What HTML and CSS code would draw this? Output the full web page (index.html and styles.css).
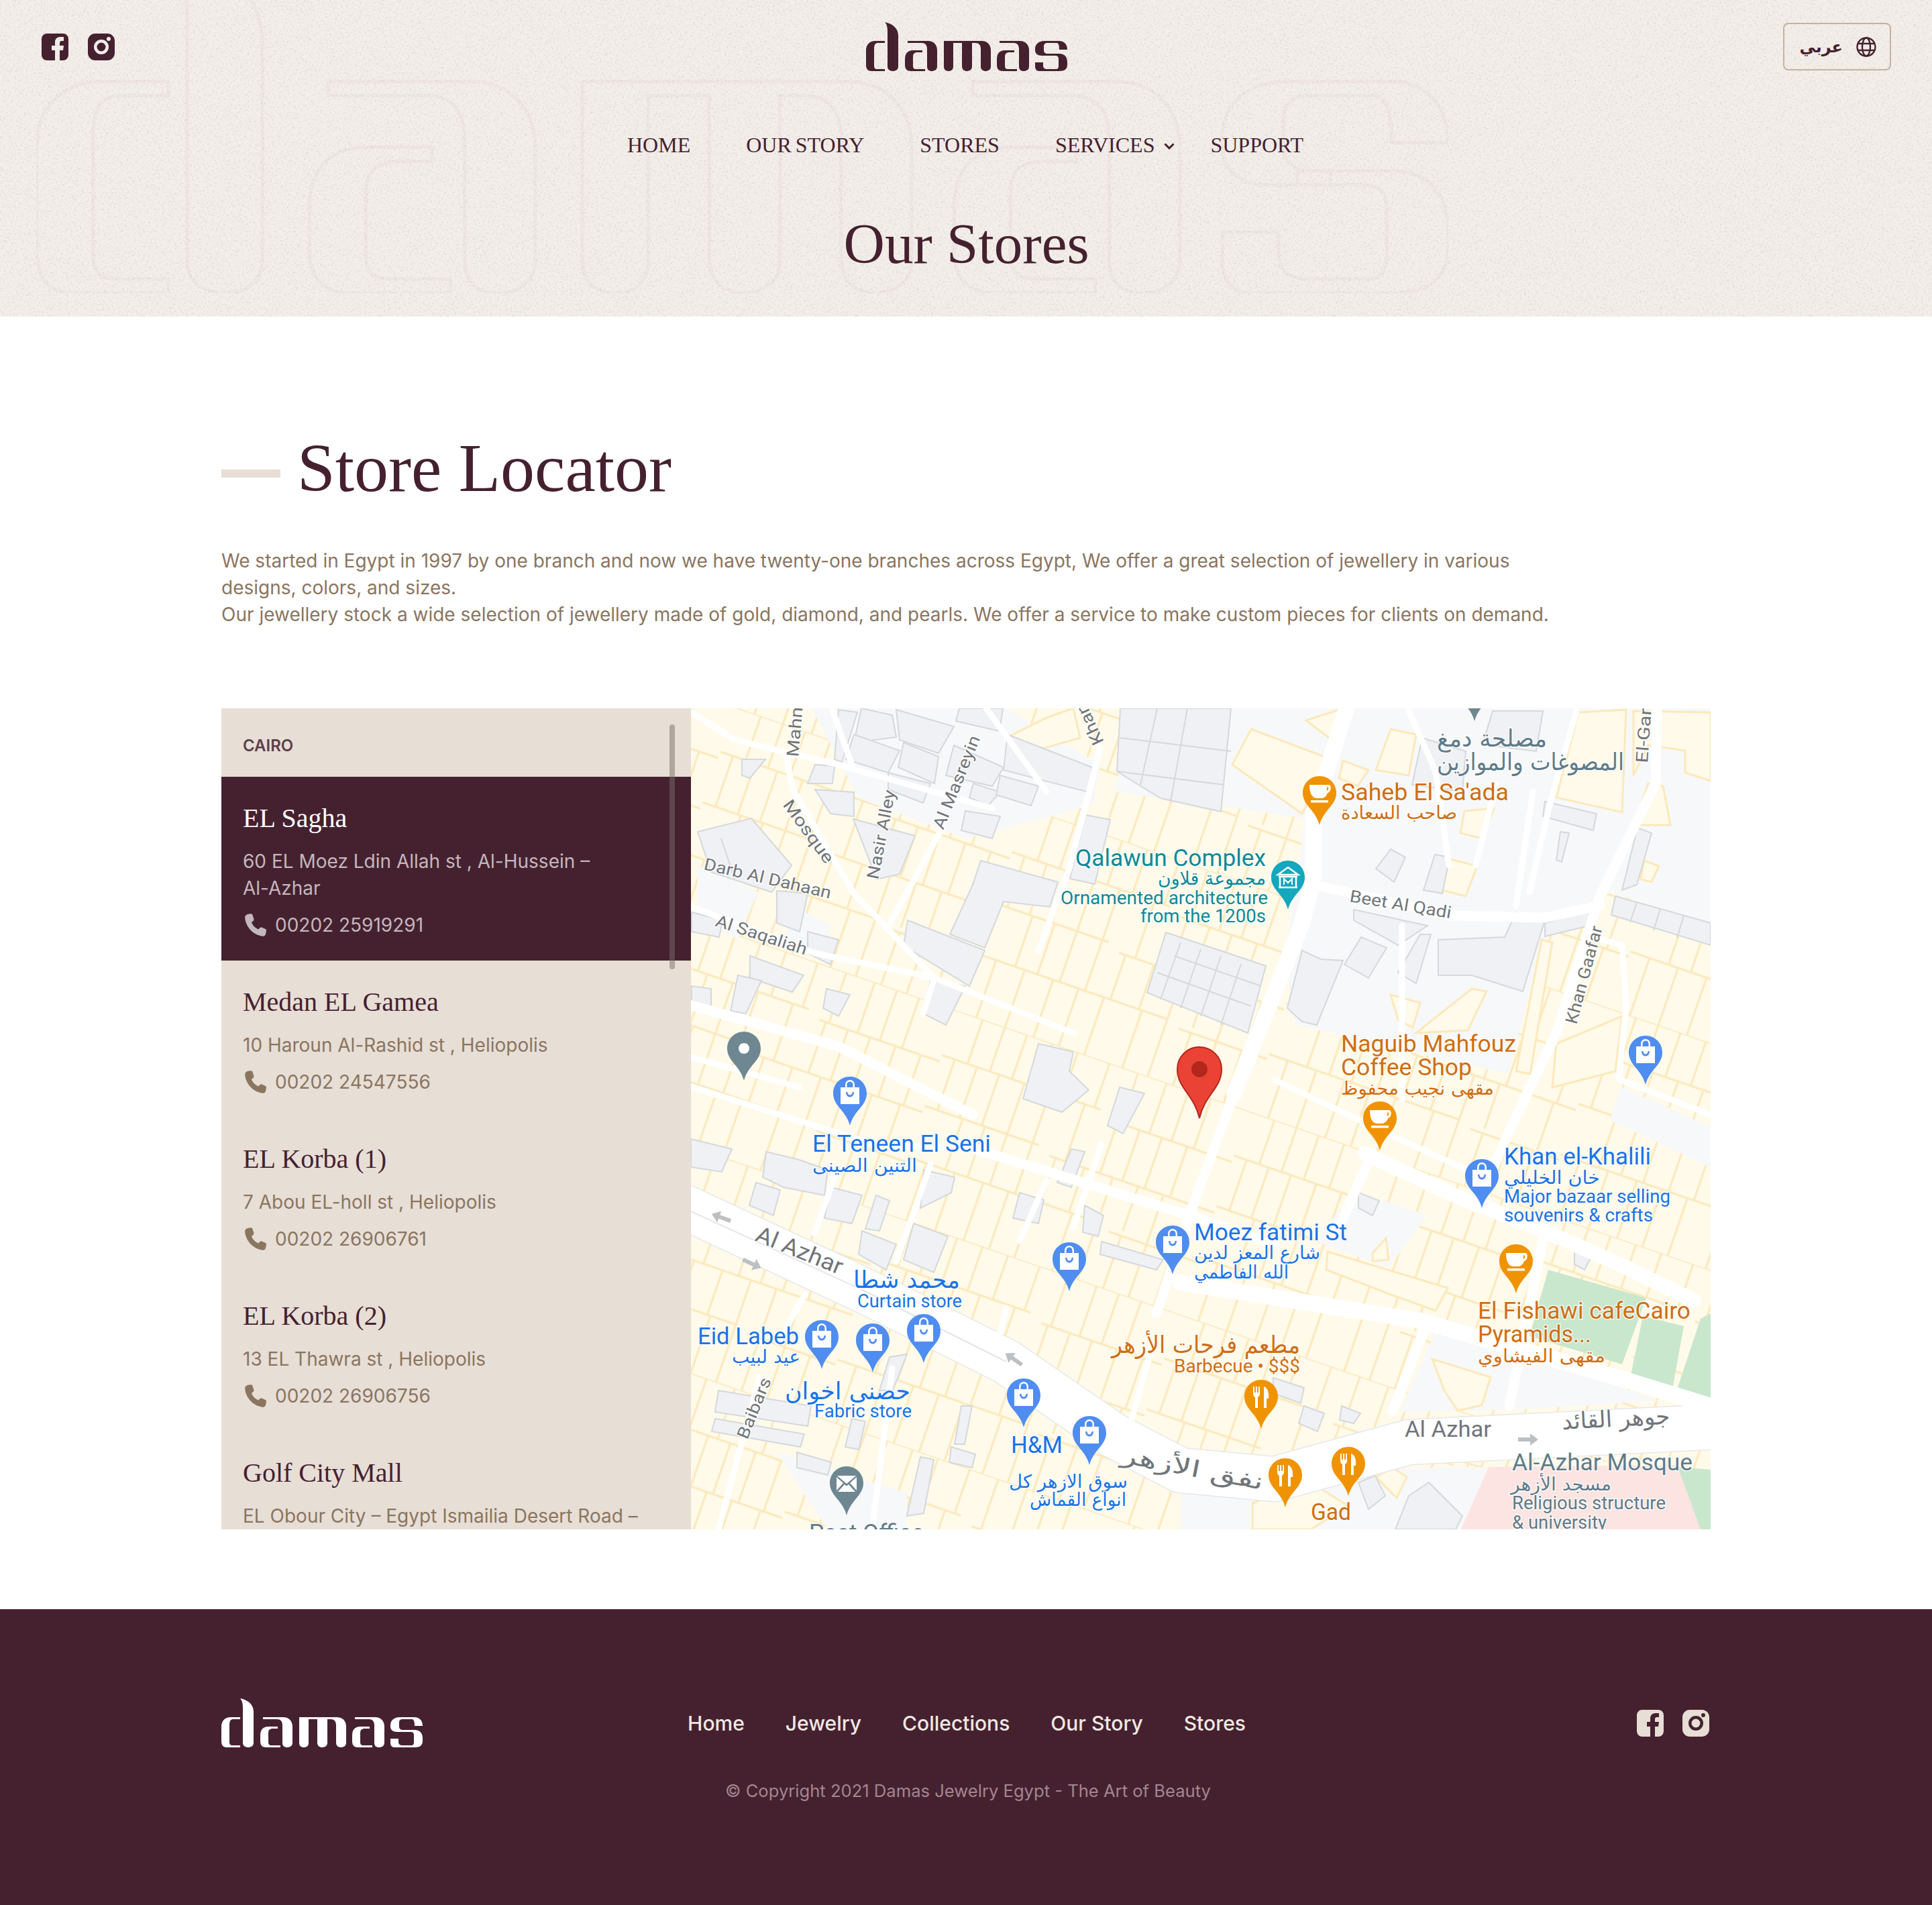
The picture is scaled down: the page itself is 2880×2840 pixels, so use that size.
FILE: index.html
```html
<!DOCTYPE html>
<html lang="en">
<head>
<meta charset="utf-8">
<title>Our Stores - Damas</title>
<link rel="stylesheet" href="styles.css">
</head>
<body>
<svg class="defs" width="0" height="0" aria-hidden="true">
  <defs>
    <symbol id="logo" viewBox="0 0 300 73">
      <path d="M28 28H14C5 28 0 34 0 42V64C0 70 3 73 8 73H28V70H17C13 70 12 68 12 65V40C12 33 14 31 18 31H28Z"/>
      <path d="M28 0C38 2 48 8 48 20V66C48 71 44 73 40 73C36 73 32 71 32 66V14C32 8 31 3 28 0Z"/>
      <path d="M62 28H92C101 28 106 34 106 42V66C106 71 102 73 98 73C94 73 91 71 91 66V40C91 34 88 31 83 31H62Z"/>
      <path d="M84 42H70C62 42 58 47 58 55V64C58 70 61 73 67 73H88V70H75C71 70 70 68 70 65V52C70 47 72 45 77 45H84Z"/>
      <path d="M116 28H172C181 28 186 34 186 42V66C186 71 182 73 178 73C175 73 171 71 171 66V40C171 34 168 31 163 31H158V66C158 71 154 73 150 73C147 73 143 71 143 66V31H130V66C130 71 127 73 123 73C119 73 116 71 116 66Z"/>
      <path d="M199 28H229C238 28 243 34 243 42V66C243 71 239 73 235 73C231 73 228 71 228 66V40C228 34 225 31 220 31H199Z"/>
      <path d="M221 42H207C199 42 195 47 195 55V64C195 70 198 73 204 73H225V70H212C208 70 207 68 207 65V52C207 47 209 45 214 45H221Z"/>
      <path d="M300 41C300 33 295 28 288 28H266C257 28 252 33 252 40V42C252 47 256 50 262 50H275V47H271C267 47 265 45 265 42V36C265 33 267 31 270 31H284C288 31 288 38 288 41Z"/>
      <path d="M268 47H288C296 47 300 52 300 60V63C300 70 296 73 288 73H258C254 73 252 70 252 66V60H264V65C264 68 266 70 270 70H283C286 70 287 68 287 65V55C287 51 285 50 282 50H268Z"/>
    </symbol>
    <symbol id="fb" viewBox="0 0 40 40">
      <path fill-rule="evenodd" d="M8 0H32A8 8 0 0 1 40 8V32A8 8 0 0 1 32 40H27V25H32L33 18H27V14C27 12 28 11 30 11H33V5H28C23 5 20 8 20 13V18H15V25H20V40H8A8 8 0 0 1 0 32V8A8 8 0 0 1 8 0Z"/>
    </symbol>
    <symbol id="ig" viewBox="0 0 40 40">
      <path fill-rule="evenodd" d="M11 0H29A11 11 0 0 1 40 11V29A11 11 0 0 1 29 40H11A11 11 0 0 1 0 29V11A11 11 0 0 1 11 0ZM20 9A11 11 0 1 0 20 31A11 11 0 1 0 20 9ZM20 13.500A6.500 6.500 0 1 1 20 26.500A6.500 6.500 0 1 1 20 13.500ZM31 5A3 3 0 1 0 31 11A3 3 0 1 0 31 5Z"/>
    </symbol>
    <symbol id="phone" viewBox="0 0 32 32">
      <path d="M7 1.500L10.500 1C11.800 1 12.500 1.800 13 3L14.500 8C14.800 9 14.500 10 13.500 10.800L11.500 12.500C13 16.500 16 20 20.500 21.800L22.500 19.800C23.300 19 24.200 18.800 25.200 19.200L29.500 21C30.800 21.600 31.300 22.500 31 24L30.300 27.800C29.800 30 28.300 31 26.300 30.800C14 29.500 3.500 18.500 2.800 6C2.700 3.500 4.500 2 7 1.500Z"/>
    </symbol>
    <symbol id="pin" viewBox="0 0 50 73">
      <path d="M25 0C11 0 0 11 0 25C0 44 19 50 25 73C31 50 50 44 50 25C50 11 39 0 25 0Z"/>
    </symbol>
    <g id="i-shop">
      <path class="ic-fill" fill-rule="evenodd" d="M11 16H18V12A7 7 0 0 1 32 12V16H39V41H11ZM20.500 16H29.500V12A4.500 4.500 0 0 0 20.500 12ZM19 23C19 33 31 33 31 23H28.500C28.500 29 21.500 29 21.500 23Z"/>
    </g>
    <g id="i-coffee">
      <path class="ic-fill" fill-rule="evenodd" d="M10 13H39C43 13 43 24 37 25C36 29 33 32 29 33H20C13 32 10 24 10 13ZM36 16V22C39 21 39 16 36 16ZM12 36H38V39.500H12Z"/>
    </g>
    <g id="i-food">
      <path class="ic-fill" d="M13 10H15V19H17V10H19V19H21V10H23V21C23 24 21 25 20 26V42H16V26C14 25 13 24 13 21ZM29 10C35 12 37 20 36 28H33V42H29Z"/>
    </g>
    <g id="i-mail">
      <path class="ic-fill" d="M11 14H39L25 26ZM10 16L20 25L10 36ZM40 16V36L30 25ZM12 38L22 27L25 29.500L28 27L38 38Z"/>
    </g>
    <g id="i-museum">
      <path class="ic-stroke" d="M10 21L25 10L40 21ZM13 24V39M37 24V39M11 40H39M11 24H39"/>
      <path class="ic-stroke thin" d="M19 36V27L25 33L31 27V36"/>
    </g>
    <pattern id="blocks" width="460" height="320" patternUnits="userSpaceOnUse" patternTransform="rotate(19)">
      <rect width="460" height="320" class="p-bg"/>
      <path class="p-line" d="M0 0H460M0 70H250M270 80H460M0 150H180M200 160H460M0 230H300M320 238H460M40 0V70M75 0V70M110 0V70M150 0V70M190 0V70M240 0V70M285 0V80M330 0V80M365 0V80M400 0V80M20 70V150M55 70V150M90 70V150M130 70V150M170 70V150M225 70V160M280 80V160M315 80V160M350 80V160M390 80V160M430 80V160M60 150V230M95 150V230M130 150V230M170 150V230M210 160V230M255 160V230M300 160V230M340 160V230M380 160V238M425 160V238M30 230V320M75 230V320M120 230V320M160 230V320M200 230V320M260 230V320M300 230V320M340 238V320M380 238V320M420 238V320"/>
    </pattern>
  </defs>
</svg>

<header class="site-head">
  <svg class="noise" width="2880" height="472" aria-hidden="true">
    <filter id="grain" x="0" y="0" width="100%" height="100%">
      <feTurbulence type="fractalNoise" baseFrequency="0.36" numOctaves="2" seed="7"/>
      <feColorMatrix values="0 0 0 0 0.56  0 0 0 0 0.49  0 0 0 0 0.44  3 0 0 0 -1.500"/>
    </filter>
    <rect width="2880" height="472" filter="url(#grain)" class="grain-rect"/>
  </svg>
  <svg class="watermark" aria-hidden="true"><use href="#logo"/></svg>
  <div class="head-row">
    <div class="socials dark">
      <svg class="soc"><use href="#fb"/></svg>
      <svg class="soc"><use href="#ig"/></svg>
    </div>
    <svg class="logo dark" role="img" aria-label="damas"><use href="#logo"/></svg>
    <div class="lang-wrap">
      <a class="lang" href="#">
        <span class="lang-text" lang="ar">عربي</span>
        <svg class="globe" viewBox="0 0 30 30" aria-hidden="true">
          <circle cx="15" cy="15" r="13.500"/>
          <ellipse cx="15" cy="15" rx="6" ry="13.500"/>
          <path d="M3 10H27M3 20H27"/>
        </svg>
      </a>
    </div>
  </div>
  <nav class="main-nav">
    <a href="#">HOME</a>
    <a href="#">OUR STORY</a>
    <a href="#">STORES</a>
    <a href="#" class="has-sub">SERVICES<svg class="chev" viewBox="0 0 16 10" aria-hidden="true"><path d="M1.500 1.500L8 8L14.500 1.500"/></svg></a>
    <a href="#">SUPPORT</a>
  </nav>
  <h1 class="page-title">Our Stores</h1>
</header>

<main class="store-sec">
  <h2 class="sec-title"><span class="dash"></span>Store Locator</h2>
  <p class="intro">We started in Egypt in 1997 by one branch and now we have twenty-one branches across Egypt, We offer a great selection of jewellery in various designs, colors, and sizes.<br>Our jewellery stock a wide selection of jewellery made of gold, diamond, and pearls. We offer a service to make custom pieces for clients on demand.</p>

  <div class="locator">
    <aside class="stores">
      <div class="scroll-thumb"></div>
      <div class="city">CAIRO</div>
      <article class="store active">
        <h3>EL Sagha</h3>
        <p class="addr">60 EL Moez Ldin Allah st , Al-Hussein – <span class="nb">Al-Azhar</span></p>
        <p class="tel"><svg class="ph"><use href="#phone"/></svg>00202 25919291</p>
      </article>
      <article class="store">
        <h3>Medan EL Gamea</h3>
        <p class="addr">10 Haroun Al-Rashid st , Heliopolis</p>
        <p class="tel"><svg class="ph"><use href="#phone"/></svg>00202 24547556</p>
      </article>
      <article class="store">
        <h3>EL Korba (1)</h3>
        <p class="addr">7 Abou EL-holl st , Heliopolis</p>
        <p class="tel"><svg class="ph"><use href="#phone"/></svg>00202 26906761</p>
      </article>
      <article class="store">
        <h3>EL Korba (2)</h3>
        <p class="addr">13 EL Thawra st , Heliopolis</p>
        <p class="tel"><svg class="ph"><use href="#phone"/></svg>00202 26906756</p>
      </article>
      <article class="store">
        <h3>Golf City Mall</h3>
        <p class="addr">EL Obour City – Egypt Ismailia Desert Road –</p>
      </article>
    </aside>

    <svg class="map" viewBox="1030 1056 1520 1224" role="img" aria-label="Map of Al-Azhar, Cairo">
      <rect x="1030" y="1056" width="1520" height="1224" fill="url(#blocks)"/>

      <!-- open ground -->
      <g class="ground">
        <polygon points="1660,1180 1700,1056 2550,1056 2550,1376 2400,1330 2303,1401 2248,1601 1930,1527 1915,1430 1945,1220 1810,1200"/>
        <polygon points="2020,1775 2128,1812 2070,1890 1960,1850"/>
        <polygon points="2087,2105 2143,1979 2474,2088 2270,2101"/>
        <polygon points="1760,2195 2219,2187 2178,2280 1760,2280"/>
        <polygon points="1158,2165 1352,2226 1352,2280 1234,2280"/>
        <polygon points="1040,1290 1130,1330 1100,1400 1040,1370"/>
        <polygon points="1180,1350 1240,1380 1220,1420 1170,1400"/>
        <polygon points="2417,1620 2550,1680 2550,1740 2400,1670"/>
        <polygon points="1210,1056 1500,1056 1640,1140 1630,1200 1440,1250 1280,1190"/>
      </g>

      <!-- yellow patches on ground -->
      <g class="yellow">
        <polygon points="1865,1087 1985,1132 1941,1213 1837,1140"/>
        <polygon points="1947,1074 1996,1058 2013,1070 1985,1103"/>
        <polygon points="2002,1134 2040,1148 2024,1172 1996,1160"/>
        <polygon points="2073,1087 2111,1095 2100,1156 2051,1148"/>
        <polygon points="2353,1062 2424,1058 2418,1211 2320,1189"/>
        <polygon points="2435,1060 2550,1062 2550,1164 2512,1152 2512,1119 2457,1111 2435,1156"/>
        <polygon points="2457,1168 2479,1172 2490,1230 2435,1230"/>
        <polygon points="2155,1279 2202,1291 2185,1336 2150,1327"/>
        <polygon points="2183,1209 2227,1205 2210,1250 2177,1242"/>
        <polygon points="2451,1283 2473,1291 2462,1315 2446,1311"/>
        <polygon points="2073,1483 2117,1495 2106,1532 2084,1520"/>
        <polygon points="2298,1401 2314,1405 2281,1601 2260,1597"/>
        <polygon points="2320,1556 2418,1515 2408,1597 2314,1621"/>
        <polygon points="2194,1474 2216,1478 2188,1536 2111,1540"/>
        <polygon points="2135,2026 2222,2053 2209,2095 2173,2103 2153,2073"/>
        <polygon points="1867,2241 1949,2207 2010,2245 1954,2280 1867,2280"/>
        <polygon points="2051,2202 2076,2188 2097,2202 2082,2233"/>
        <polygon points="1979,1866 2158,1920 2140,1954 2076,1931 1977,1893"/>
        <polygon points="2046,1868 2066,1846 2070,1878 2046,1880"/>
        <polygon points="1500,1100 1560,1070 1600,1056 1610,1100 1540,1120"/>
      </g>

      <!-- parks -->
      <g class="park">
        <polygon points="2308,1893 2454,1935 2418,2034 2280,1992"/>
        <polygon points="2449,1962 2510,1977 2490,2088 2428,2065"/>
        <polygon points="2535,1966 2550,1958 2550,2092 2495,2086"/>
        <polygon points="2500,2187 2550,2191 2550,2280 2520,2280"/>
      </g>
      <polygon class="pink" points="2219,2187 2500,2184 2535,2280 2178,2280"/>

      <!-- buildings -->
      <g class="bld">
        <polygon points="1215,1140 1244,1142 1241,1168 1204,1168"/>
        <polygon points="1250,1058 1278,1062 1255,1136 1244,1132"/>
        <polygon points="1284,1056 1330,1066 1336,1099 1273,1107"/>
        <polygon points="1273,1095 1341,1119 1324,1152 1261,1132"/>
        <polygon points="1336,1058 1422,1083 1399,1123 1341,1103"/>
        <polygon points="1347,1107 1399,1128 1393,1168 1339,1144"/>
        <polygon points="1215,1177 1273,1181 1273,1217 1238,1213"/>
        <polygon points="1324,1152 1387,1168 1376,1197 1324,1177"/>
        <polygon points="1422,1111 1496,1144 1479,1172 1410,1156"/>
        <polygon points="1451,1168 1491,1181 1473,1201 1445,1189"/>
        <polygon points="1502,1095 1628,1144 1623,1181 1496,1148"/>
        <polygon points="1491,1156 1548,1172 1537,1201 1485,1185"/>
        <polygon points="1439,1209 1491,1217 1479,1250 1433,1238"/>
        <polygon points="1430,1056 1495,1056 1490,1090 1425,1075"/>
        <polygon points="1106,1132 1141,1132 1118,1160 1106,1156"/>
        <polygon points="1031,1360 1077,1372 1072,1397 1031,1389"/>
        <polygon points="1204,1389 1250,1401 1238,1438 1204,1421"/>
        <polygon points="1158,1328 1204,1332 1192,1389 1158,1376"/>
        <polygon points="1031,1470 1060,1474 1060,1503 1031,1495"/>
        <polygon points="1670,1056 1835,1056 1820,1210 1730,1190 1665,1150"/>
        <polygon points="1040,1240 1120,1220 1180,1290 1150,1330 1060,1300"/>
        <polygon points="1272,1221 1364,1246 1341,1303 1307,1311"/>
        <polygon points="1462,1283 1577,1315 1565,1352 1496,1344 1468,1413 1416,1393 1450,1319"/>
        <polygon points="1353,1372 1468,1417 1445,1470 1347,1410"/>
        <polygon points="1118,1425 1198,1454 1181,1479 1118,1458"/>
        <polygon points="1100,1454 1135,1462 1112,1511 1089,1507"/>
        <polygon points="1387,1462 1439,1470 1410,1528 1376,1511"/>
        <polygon points="1232,1474 1267,1483 1250,1515 1227,1503"/>
        <polygon points="1548,1556 1600,1568 1594,1597 1623,1625 1583,1658 1525,1638"/>
        <polygon points="1669,1621 1706,1630 1674,1690 1651,1678"/>
        <polygon points="1618,1215 1655,1222 1632,1318 1595,1310"/>
        <polygon points="1738,1390 1887,1440 1860,1540 1710,1480"/>
        <polygon points="2051,1295 2073,1266 2095,1278 2078,1315"/>
        <polygon points="2122,1327 2139,1274 2161,1278 2150,1332"/>
        <polygon points="2018,1356 2128,1380 2084,1409 2018,1372"/>
        <polygon points="2084,1450 2117,1393 2133,1393 2111,1466"/>
        <polygon points="2144,1401 2243,1397 2260,1360 2303,1372 2270,1478 2194,1454 2144,1454"/>
        <polygon points="2303,1376 2369,1356 2369,1380 2303,1396"/>
        <polygon points="2408,1336 2550,1376 2550,1409 2402,1364"/>
        <polygon points="2418,1327 2441,1234 2462,1242 2440,1319"/>
        <polygon points="2303,1195 2380,1213 2375,1238 2300,1217"/>
        <polygon points="2320,1282 2326,1240 2339,1242 2328,1285"/>
        <polygon points="1941,1417 1969,1430 2002,1432 1963,1528 1941,1523 1919,1503"/>
        <polygon points="2004,1438 2029,1397 2067,1413 2040,1458"/>
        <polygon points="2120,1100 2185,1120 2180,1180 2105,1170"/>
        <polygon points="2225,1060 2300,1060 2290,1120 2210,1110"/>
        <polygon points="1030,1698 1091,1713 1076,1747 1030,1740"/>
        <polygon points="1142,1717 1188,1728 1234,1744 1229,1782 1168,1770 1137,1755"/>
        <polygon points="1127,1763 1163,1774 1153,1812 1117,1797"/>
        <polygon points="1239,1770 1285,1782 1270,1824 1229,1816"/>
        <polygon points="1306,1782 1326,1790 1311,1835 1290,1832"/>
        <polygon points="1377,1744 1423,1755 1418,1778 1372,1801"/>
        <polygon points="1362,1824 1413,1843 1392,1897 1347,1878"/>
        <polygon points="1285,1835 1336,1855 1321,1893 1280,1870"/>
        <polygon points="1520,1778 1556,1789 1548,1824 1510,1816"/>
        <polygon points="1617,1797 1645,1812 1637,1843 1614,1837"/>
        <polygon points="1642,1851 1734,1878 1724,1893 1640,1870"/>
        <polygon points="1597,1713 1617,1717 1597,1770 1576,1763"/>
        <polygon points="1326,2023 1352,2019 1331,2073 1311,2073"/>
        <polygon points="1066,2115 1199,2138 1193,2157 1061,2134"/>
        <polygon points="1071,2073 1209,2096 1204,2126 1066,2105"/>
        <polygon points="1188,2165 1239,2180 1234,2199 1188,2188"/>
        <polygon points="1433,2096 1449,2096 1438,2153 1423,2153"/>
        <polygon points="1270,2115 1290,2119 1280,2161 1260,2157"/>
        <polygon points="1372,2172 1392,2176 1377,2256 1352,2260"/>
        <polygon points="1418,2157 1454,2168 1449,2188 1415,2180"/>
        <polygon points="2025,1778 2056,1790 2046,1812 2025,1801"/>
        <polygon points="2347,1866 2372,1874 2362,1893 2347,1885"/>
        <polygon points="1898,2054 1944,2069 1939,2092 1898,2077"/>
        <polygon points="1944,2096 1974,2107 1964,2134 1936,2122"/>
        <polygon points="2000,2096 2028,2107 2018,2122 1997,2117"/>
        <polygon points="2025,2210 2050,2200 2065,2230 2040,2250"/>
        <polygon points="2100,2230 2130,2210 2180,2260 2170,2280 2080,2280"/>
      </g>
      <path class="bld-lines" d="M1725 1056L1700 1170M1770 1056L1745 1195M1670 1100L1835 1120M1665 1150L1825 1170M1760 1405L1730 1490M1790 1415L1760 1503M1820 1425L1790 1515M1850 1437L1820 1528M1750 1425L1880 1470M1725 1450L1865 1500M2440 1345L2430 1375M2475 1355L2465 1387M2510 1365L2500 1398M1075 1250L1095 1310"/>

      <!-- roads -->
      <g class="roads">
        <path class="r-case r90" d="M1000 1790L1290 1925L1500 2030L1660 2140L1760 2192L1900 2205L2100 2150L2600 2125"/>
        <path class="r90" d="M1000 1790L1290 1925L1500 2030L1660 2140L1760 2192L1900 2205L2100 2150L2600 2125"/>
        <path class="r26" d="M2007 1056L1958 1213L1958 1311L1941 1376L1892 1499L1840 1630"/>
        <path class="r20" d="M1840 1630L1770 1820L1724 1958"/>
        <path class="r20" d="M1958 1319L2163 1365L2303 1368L2385 1350"/>
        <path class="r20" d="M2470 1056L2468 1168L2385 1336L2320 1540L2248 1690L2200 1800"/>
        <path class="r14" d="M2385 1400L2418 1409L2424 1499L2413 1609L2550 1662"/>
        <path class="r24" d="M2035 1720L2168 1782L2295 1832L2423 1889L2525 1939"/>
        <path class="r26" d="M1760 1912L2117 1969L2423 2057L2550 2096"/>
        <path class="r20" d="M2127 1973L2076 2103"/>
        <path class="r20" d="M2045 1720L1990 1843"/>
        <path class="r20" d="M2301 1843L2250 2096"/>
        <path class="r14" d="M1031 1062L1095 1103L1250 1140L1479 1205"/>
        <path class="r14" d="M1172 1128L1181 1176L1273 1332L1393 1458L1376 1511"/>
        <path class="r14" d="M1405 1234L1324 1381"/>
        <path class="r14" d="M1640 1115L1594 1295L1548 1417"/>
        <path class="r14" d="M1031 1352L1215 1421L1393 1458L1600 1540"/>
        <path class="r20" d="M1031 1499L1250 1560L1450 1662"/>
        <path class="r14" d="M1031 1576L1192 1621"/>
        <path class="r14" d="M1244 1755L1214 1839"/>
        <path class="r14" d="M1387 1736L1336 1881"/>
        <path class="r20" d="M1454 1713L1785 1816L1900 1855"/>
        <path class="r14" d="M1642 1705L1600 1830"/>
        <path class="r14" d="M1132 2053L1071 2280"/>
        <path class="r14" d="M1030 1620L1300 1705L1440 1713"/>
        <path class="r14" d="M1270 1140L1240 1056M1470 1056L1560 1180"/>
        <path class="r14" d="M2090 1640L2090 1380M2100 1060L2140 1150L2160 1290"/>
        <path class="r14" d="M2350 1060L2310 1200L2280 1330"/>
        <path class="r14" d="M1900 1610L2090 1700L2200 1750"/>
        <path class="r14" d="M1500 1950L1480 2030M1200 1930L1160 2000M1330 2040L1300 2280"/>
        <path class="r14" d="M1720 2000L1680 2140M1560 1760L1520 1850"/>
        <path class="r14" d="M2230 1170L2200 1290M2285 1180L2260 1350"/>
      </g>
      <path class="center-line" d="M1030 1806L1290 1925L1500 2030"/>

      <!-- direction arrows -->
      <g class="arrows">
        <path transform="translate(1075 1815) rotate(200)" d="M-15 -3H3V-9L15 0L3 9V3H-15Z"/>
        <path transform="translate(1121 1884) rotate(25)" d="M-15 -3H3V-9L15 0L3 9V3H-15Z"/>
        <path transform="translate(1511 2026) rotate(215)" d="M-15 -3H3V-9L15 0L3 9V3H-15Z"/>
        <path transform="translate(2278 2146)" d="M-15 -3H3V-9L15 0L3 9V3H-15Z"/>
      </g>

      <!-- street labels -->
      <g class="lbl street">
        <text transform="translate(1190 1129) rotate(-85)" textLength="84" lengthAdjust="spacingAndGlyphs">Mahm</text>
        <text transform="translate(1166 1200) rotate(54)" textLength="110" lengthAdjust="spacingAndGlyphs">Mosque</text>
        <text transform="translate(1309 1312) rotate(-79)" textLength="135" lengthAdjust="spacingAndGlyphs">Nasir Alley</text>
        <text transform="translate(1406 1238) rotate(-68)" textLength="148" lengthAdjust="spacingAndGlyphs">Al Masreyin</text>
        <text transform="translate(1646 1106) rotate(-115)" textLength="66" lengthAdjust="spacingAndGlyphs">Khan</text>
        <text transform="translate(1048 1296) rotate(13)" textLength="194" lengthAdjust="spacingAndGlyphs">Darb Al Dahaan</text>
        <text transform="translate(1065 1380) rotate(18)" textLength="142" lengthAdjust="spacingAndGlyphs">Al Saqaliah</text>
        <text transform="translate(2011 1344) rotate(9.500)" textLength="153" lengthAdjust="spacingAndGlyphs">Beet Al Qadi</text>
        <text transform="translate(2350 1528) rotate(-75)" textLength="150" lengthAdjust="spacingAndGlyphs">Khan Gaafar</text>
        <text transform="translate(2456 1138) rotate(-86)" textLength="92" lengthAdjust="spacingAndGlyphs">El-Garr</text>
        <text transform="translate(1114 2147) rotate(-68)" textLength="96" lengthAdjust="spacingAndGlyphs">Baibars</text>
      </g>
      <g class="lbl street big">
        <text transform="translate(1124 1849) rotate(22)" textLength="137" lengthAdjust="spacingAndGlyphs">Al Azhar</text>
        <text x="2094" y="2142" textLength="129" lengthAdjust="spacingAndGlyphs">Al Azhar</text>
      </g>
      <g class="lbl street ar big" lang="ar">
        <text transform="translate(1670 2180) rotate(11)" textLength="215" lengthAdjust="spacingAndGlyphs">نفق الأزهر</text>
        <text transform="translate(2329 2131) rotate(-3)" textLength="161" lengthAdjust="spacingAndGlyphs">جوهر القائد</text>
      </g>

      <!-- place labels -->
      <g class="lbl teal">
        <text class="big" x="1603" y="1291" textLength="284" lengthAdjust="spacingAndGlyphs">Qalawun Complex</text>
        <text class="mid" x="1581" y="1348" textLength="309" lengthAdjust="spacingAndGlyphs">Ornamented architecture</text>
        <text class="mid" x="1700" y="1375" textLength="187" lengthAdjust="spacingAndGlyphs">from the 1200s</text>
        <text class="ar small" lang="ar" x="1726" y="1319" textLength="161" lengthAdjust="spacingAndGlyphs">مجموعة قلاون</text>
      </g>
      <g class="lbl slate">
        <text class="ar big" lang="ar" x="2142" y="1113" textLength="164" lengthAdjust="spacingAndGlyphs">مصلحة دمغ</text>
        <text class="ar big" lang="ar" x="2142" y="1148" textLength="279" lengthAdjust="spacingAndGlyphs">المصوغات والموازين</text>
        <text class="big" x="1206" y="2297" textLength="171" lengthAdjust="spacingAndGlyphs">Post Office</text>
        <text class="big" x="2254" y="2192" textLength="269" lengthAdjust="spacingAndGlyphs">Al-Azhar Mosque</text>
        <text class="ar small" lang="ar" x="2252" y="2222" textLength="150" lengthAdjust="spacingAndGlyphs">مسجد الأزهر</text>
        <text class="mid" x="2254" y="2250" textLength="229" lengthAdjust="spacingAndGlyphs">Religious structure</text>
        <text class="mid" x="2254" y="2279" textLength="141" lengthAdjust="spacingAndGlyphs">&amp; university</text>
      </g>
      <g class="lbl amber">
        <text class="big" x="1999" y="1193" textLength="250" lengthAdjust="spacingAndGlyphs">Saheb El Sa'ada</text>
        <text class="ar small" lang="ar" x="1999" y="1221" textLength="173" lengthAdjust="spacingAndGlyphs">صاحب السعادة</text>
        <text class="big" x="1999" y="1568" textLength="261" lengthAdjust="spacingAndGlyphs">Naguib Mahfouz</text>
        <text class="big" x="1999" y="1603" textLength="195" lengthAdjust="spacingAndGlyphs">Coffee Shop</text>
        <text class="ar small" lang="ar" x="1999" y="1632" textLength="228" lengthAdjust="spacingAndGlyphs">مقهى نجيب محفوظ</text>
        <text class="big" x="2203" y="1966" textLength="317" lengthAdjust="spacingAndGlyphs">El Fishawi cafeCairo</text>
        <text class="big" x="2203" y="2001" textLength="169" lengthAdjust="spacingAndGlyphs">Pyramids...</text>
        <text class="ar small" lang="ar" x="2203" y="2031" textLength="190" lengthAdjust="spacingAndGlyphs">مقهى الفيشاوي</text>
        <text class="ar big" lang="ar" x="1657" y="2017" textLength="281" lengthAdjust="spacingAndGlyphs">مطعم فرحات الأزهر</text>
        <text class="mid" x="1750" y="2046" textLength="188" lengthAdjust="spacingAndGlyphs">Barbecue • $$$</text>
        <text class="big" x="1954" y="2266" textLength="60" lengthAdjust="spacingAndGlyphs">Gad</text>
      </g>
      <g class="lbl blue">
        <text class="big" x="1211" y="1717" textLength="266" lengthAdjust="spacingAndGlyphs">El Teneen El Seni</text>
        <text class="ar small" lang="ar" x="1211" y="1747" textLength="156" lengthAdjust="spacingAndGlyphs">التنين الصينى</text>
        <text class="ar big" lang="ar" x="1272" y="1920" textLength="159" lengthAdjust="spacingAndGlyphs">محمد شطا</text>
        <text class="mid" x="1278" y="1949" textLength="156" lengthAdjust="spacingAndGlyphs">Curtain store</text>
        <text class="big" x="1040" y="2004" textLength="151" lengthAdjust="spacingAndGlyphs">Eid Labeb</text>
        <text class="ar small" lang="ar" x="1091" y="2032" textLength="102" lengthAdjust="spacingAndGlyphs">عيد لبيب</text>
        <text class="ar big" lang="ar" x="1170" y="2086" textLength="187" lengthAdjust="spacingAndGlyphs">حصنى اخوان</text>
        <text class="mid" x="1214" y="2113" textLength="145" lengthAdjust="spacingAndGlyphs">Fabric store</text>
        <text class="big" x="1507" y="2166" textLength="77" lengthAdjust="spacingAndGlyphs">H&amp;M</text>
        <text class="ar small" lang="ar" x="1504" y="2218" textLength="177" lengthAdjust="spacingAndGlyphs">سوق الازهر كل</text>
        <text class="ar small" lang="ar" x="1535" y="2245" textLength="144" lengthAdjust="spacingAndGlyphs">انواع القماش</text>
        <text class="big" x="1780" y="1849" textLength="228" lengthAdjust="spacingAndGlyphs">Moez fatimi St</text>
        <text class="ar small" lang="ar" x="1780" y="1877" textLength="188" lengthAdjust="spacingAndGlyphs">شارع المعز لدين</text>
        <text class="ar small" lang="ar" x="1780" y="1906" textLength="141" lengthAdjust="spacingAndGlyphs">الله الفاطمي</text>
        <text class="big" x="2242" y="1736" textLength="219" lengthAdjust="spacingAndGlyphs">Khan el-Khalili</text>
        <text class="ar small" lang="ar" x="2242" y="1765" textLength="143" lengthAdjust="spacingAndGlyphs">خان الخليلي</text>
        <text class="mid" x="2242" y="1793" textLength="248" lengthAdjust="spacingAndGlyphs">Major bazaar selling</text>
        <text class="mid" x="2242" y="1821" textLength="222" lengthAdjust="spacingAndGlyphs">souvenirs &amp; crafts</text>
      </g>

      <!-- pins: x,y is the top left of the 50x73 marker -->
      <g class="pin-blue">
        <g transform="translate(1242 1605)"><use href="#pin" width="50" height="73"/><use href="#i-shop"/></g>
        <g transform="translate(2428 1544)"><use href="#pin" width="50" height="73"/><use href="#i-shop"/></g>
        <g transform="translate(1200 1968)"><use href="#pin" width="50" height="73"/><use href="#i-shop"/></g>
        <g transform="translate(1276 1973)"><use href="#pin" width="50" height="73"/><use href="#i-shop"/></g>
        <g transform="translate(1352 1959)"><use href="#pin" width="50" height="73"/><use href="#i-shop"/></g>
        <g transform="translate(1569 1852)"><use href="#pin" width="50" height="73"/><use href="#i-shop"/></g>
        <g transform="translate(1723 1827)"><use href="#pin" width="50" height="73"/><use href="#i-shop"/></g>
        <g transform="translate(1501 2055)"><use href="#pin" width="50" height="73"/><use href="#i-shop"/></g>
        <g transform="translate(1599 2111)"><use href="#pin" width="50" height="73"/><use href="#i-shop"/></g>
        <g transform="translate(2184 1728)"><use href="#pin" width="50" height="73"/><use href="#i-shop"/></g>
      </g>
      <g class="pin-slate">
        <g transform="translate(1084 1538)"><use href="#pin" width="50" height="73"/><circle class="ic-fill" cx="25" cy="25" r="8"/></g>
        <g transform="translate(1237 2186)"><use href="#pin" width="50" height="73"/><use href="#i-mail"/></g>
        <g transform="translate(2173 1002)"><use href="#pin" width="50" height="73"/></g>
      </g>
      <g class="pin-teal">
        <g transform="translate(1895 1283)"><use href="#pin" width="50" height="73"/><use href="#i-museum"/></g>
      </g>
      <g class="pin-amber">
        <g transform="translate(1942 1157)"><use href="#pin" width="50" height="73"/><use href="#i-coffee"/></g>
        <g transform="translate(2032 1642)"><use href="#pin" width="50" height="73"/><use href="#i-coffee"/></g>
        <g transform="translate(2235 1855)"><use href="#pin" width="50" height="73"/><use href="#i-coffee"/></g>
        <g transform="translate(1855 2057)"><use href="#pin" width="50" height="73"/><use href="#i-food"/></g>
        <g transform="translate(1891 2174)"><use href="#pin" width="50" height="73"/><use href="#i-food"/></g>
        <g transform="translate(1985 2157)"><use href="#pin" width="50" height="73"/><use href="#i-food"/></g>
      </g>
      <g transform="translate(1754 1560)">
        <path class="pin-red" d="M34 1C16 1 1 15 1 34C1 62 26 72 34 107C42 72 67 62 67 34C67 15 52 1 34 1Z"/>
        <circle class="pin-red-dot" cx="34" cy="34" r="12"/>
      </g>
    </svg>
  </div>
</main>

<footer class="site-foot">
  <div class="foot-row">
    <svg class="logo light" role="img" aria-label="damas"><use href="#logo"/></svg>
    <nav class="foot-nav">
      <a href="#">Home</a>
      <a href="#">Jewelry</a>
      <a href="#">Collections</a>
      <a href="#">Our Story</a>
      <a href="#">Stores</a>
    </nav>
    <div class="socials light foot-soc">
      <svg class="soc"><use href="#fb"/></svg>
      <svg class="soc"><use href="#ig"/></svg>
    </div>
  </div>
  <p class="copy">© Copyright 2021 Damas Jewelry Egypt - The Art of Beauty</p>
</footer>
</body>
</html>
```
FILE: styles.css
```css
* { box-sizing: border-box; }
html, body { margin: 0; padding: 0; }
body {
  width: 2880px;
  background: #fff;
  color: #452130;
  font-family: Inter, "Liberation Sans", sans-serif;
}
a { color: inherit; text-decoration: none; }
.defs { position: absolute; }

/* header */
.site-head {
  position: relative;
  height: 472px;
  overflow: hidden;
  background: #f3eeea;
  padding: 33px 61px 0 62px;
  text-align: center;
}
.noise, .watermark { position: absolute; }
.noise { left: 0; top: 0; opacity: .36; }
.watermark {
  left: 54px;
  top: -75px;
  width: 2105px;
  height: 512px;
  fill: none;
  stroke: #a8545c;
  stroke-width: .75;
  opacity: .04;
}
.head-row, .main-nav, .page-title { position: relative; }
.head-row {
  display: grid;
  grid-template-columns: 1fr 300px 1fr;
  align-items: center;
}
.socials { display: flex; gap: 29px; }
.soc { width: 40px; height: 40px; display: block; }
.dark { fill: #452130; }
.light { fill: #e7ded6; }
.logo { width: 300px; height: 73px; display: block; }
.logo.light { fill: #fff; }
.lang-wrap { display: flex; justify-content: flex-end; }
.lang {
  width: 161px;
  height: 71px;
  border: 2px solid #c6b29f;
  border-radius: 8px;
  display: flex;
  align-items: center;
  justify-content: flex-end;
  gap: 20px;
  padding-right: 20px;
}
.lang-text {
  font: 700 24px "DejaVu Sans", sans-serif;
  color: #452130;
}
.globe { width: 30px; height: 30px; fill: none; stroke: #452130; stroke-width: 2.400; }
.main-nav {
  margin-top: 90px;
  padding-right: 3px;
  display: flex;
  justify-content: center;
  gap: 83px;
  word-spacing: -2px;
  font: 400 32px/40px "Liberation Serif", serif;
  color: #452130;
}
.has-sub { position: relative; }
.chev {
  position: absolute;
  left: 162px;
  top: 17px;
  width: 16px;
  height: 10px;
  fill: none;
  stroke: #452130;
  stroke-width: 3;
}
.page-title {
  margin: 72px 0 0;
  font: 400 85px/110px "Liberation Serif", serif;
  color: #452130;
}

/* store locator */
.store-sec { padding: 156px 330px 119px; }
.sec-title {
  margin: 0;
  display: flex;
  align-items: center;
  gap: 25px;
  font: 400 102px/140px "Liberation Serif", serif;
  color: #452130;
}
.dash { width: 88px; height: 12px; margin-top: 16px; background: #e7ded6; }
.intro {
  margin: 48px 0 120px;
  font-size: 28px;
  line-height: 40px;
  color: #8a755f;
  width: 1990px;
}
.locator {
  display: grid;
  grid-template-columns: 700px 1520px;
  height: 1224px;
}
.stores {
  position: relative;
  overflow: hidden;
  background: #e7ded6;
}
.scroll-thumb {
  position: absolute;
  left: 668px;
  top: 24px;
  width: 8px;
  height: 365px;
  border-radius: 4px;
  background: rgba(120, 110, 105, .5);
  z-index: 2;
}
.city {
  height: 102px;
  padding: 8px 32px 0;
  display: flex;
  align-items: center;
  font-size: 24px;
  font-weight: 600;
  color: #5d3f49;
}
.store { padding: 38px 60px 33px 32px; color: #8a755f; }
.store h3 {
  margin: 0 0 20px;
  font: 400 40px/48px "Liberation Serif", serif;
  color: #452130;
}
.addr { margin: 0 0 15px; font-size: 28px; line-height: 40px; }
.nb { white-space: nowrap; }
.tel { margin: 0; font-size: 28px; line-height: 40px; display: flex; align-items: center; gap: 12px; }
.ph { width: 36px; height: 36px; fill: #8a755f; flex: none; }
.store.active { background: #452130; color: #c4b7bc; }
.store.active h3 { color: #fff; }
.store.active .ph { fill: #c4b7bc; }

/* map */
.map { display: block; width: 1520px; height: 1224px; }
.p-bg { fill: #fffaea; }
.p-line { fill: none; stroke: #fce9bb; stroke-width: 3; }
.ground polygon { fill: #f7f8fa; }
.yellow polygon { fill: #fffaea; stroke: #fce9bb; stroke-width: 3; }
.park polygon { fill: #c9e7cc; }
.pink { fill: #fbe4e1; }
.bld polygon { fill: #eff1f4; stroke: #d5d8dc; stroke-width: 2; }
.bld-lines { fill: none; stroke: #d5d8dc; stroke-width: 2; }
.roads path { fill: none; stroke: #fff; stroke-linejoin: round; stroke-linecap: round; }
.roads .r14 { stroke-width: 9; }
.roads .r20 { stroke-width: 15; }
.roads .r24 { stroke-width: 22; }
.roads .r26 { stroke-width: 24; }
.roads .r90 { stroke-width: 66; }
.roads .r-case { stroke: #e6e8ea; stroke-width: 69; }
.center-line { fill: none; stroke: #e3e5e8; stroke-width: 2; }
.arrows path { fill: #bcc0c3; }

.lbl text {
  font-family: Roboto, sans-serif;
  paint-order: stroke;
  stroke: rgba(255, 255, 255, .75);
  stroke-width: 3px;
}
.lbl .big, .lbl.big text { font-size: 35px; }
.lbl .mid { font-size: 28px; }
.lbl .small { font-size: 27px; }
.lbl .ar, .lbl.ar text { font-family: "DejaVu Sans", sans-serif; }
.street text { font-size: 25px; fill: #70757a; }
.street.big text { font-size: 34px; }
.teal text { fill: #0e8a98; }
.slate text { fill: #5f7b89; }
.amber text { fill: #cf6e12; }
.blue text { fill: #1a73e8; }
.pin-blue { fill: #4f8df0; }
.pin-slate { fill: #6f8791; }
.pin-teal { fill: #14a7bd; }
.pin-amber { fill: #f09300; }
.pin-red { fill: #ea4335; stroke: #b3261e; stroke-width: 2; }
.pin-red-dot { fill: #b3261e; }
.ic-fill { fill: #fff; }
.ic-stroke { fill: none; stroke: #fff; stroke-width: 2.500; }
.ic-stroke.thin { stroke-width: 2; }

/* footer */
.site-foot {
  height: 441px;
  background: #452130;
  padding: 133px 330px 0;
}
.foot-row {
  display: grid;
  grid-template-columns: 1fr auto 1fr;
  align-items: center;
}
.foot-nav {
  display: flex;
  gap: 61px;
  margin-left: 2px;
  font-size: 30px;
  font-weight: 500;
  color: #f0e8e2;
}
.foot-soc { justify-content: flex-end; gap: 28px; padding-right: 2px; }
.copy {
  margin: 45px 0 0;
  text-align: center;
  font-size: 25.600px;
  line-height: 40px;
  color: #a3868f;
  padding-left: 6px;
}
```
